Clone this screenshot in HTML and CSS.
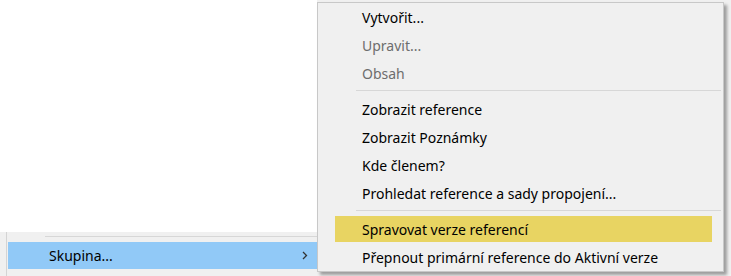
FILE: index.html
```html
<!DOCTYPE html>
<html lang="cs">
<head>
<meta charset="utf-8">
<title>Menu</title>
<link rel="stylesheet" href="styles.css">
</head>
<body>
<div class="screen">
  <div class="parent">
    <div class="parent-top"></div>
    <div class="parent-bottom">
      <div class="p-sep"></div>
      <div class="p-item active">
        <span class="p-label">Skupina...</span>
        <svg class="chev" width="6" height="9" viewBox="0 0 6 9"><path d="M1 1 L4.5 4.5 L1 8" fill="none" stroke="#333" stroke-width="1.3"/></svg>
      </div>
    </div>
  </div>
  <div class="submenu">
    <div class="item">Vytvořit...</div>
    <div class="item disabled">Upravit...</div>
    <div class="item disabled">Obsah</div>
    <div class="sep"></div>
    <div class="item">Zobrazit reference</div>
    <div class="item">Zobrazit Poznámky</div>
    <div class="item">Kde členem?</div>
    <div class="item">Prohledat reference a sady propojení...</div>
    <div class="sep"></div>
    <div class="item hot">Spravovat verze referencí</div>
    <div class="item">Přepnout primární reference do Aktivní verze</div>
  </div>
</div>
</body>
</html>
```
FILE: styles.css
```css
html, body {
  margin: 0;
  padding: 0;
  background: #f0f0f0;
}
.screen {
  position: relative;
  width: 731px;
  height: 276px;
  overflow: hidden;
  font-family: "Noto Sans", "Open Sans", sans-serif;
  font-size: 14px;
  color: #000;
}
.parent {
  width: 317px;
  height: 276px;
  display: flex;
  flex-direction: column;
}
.parent-top {
  height: 232px;
  background: #fff;
}
.parent-bottom {
  flex: 1;
  margin-left: 6px;
  border-left: 1px solid #d4d4d4;
  background: #f0f0f0;
  display: flex;
  flex-direction: column;
}
.p-sep {
  height: 1px;
  background: #d7d7d7;
  margin: 4px 0 5px 38px;
}
.p-item {
  height: 27px;
  margin-left: 1px;
  display: flex;
  align-items: center;
  padding-left: 41px;
  padding-right: 9px;
}
.p-item.active {
  background: #91c9f7;
}
.p-label {
  flex: 1;
}
.chev {
  display: block;
}
.submenu {
  position: absolute;
  left: 317px;
  top: 2px;
  width: 405px;
  height: 268px;
  background: #f0f0f0;
  border: 1px solid #c8c8c8;
  box-shadow: 3px 3px 3px rgba(0, 0, 0, 0.35);
  display: flex;
  flex-direction: column;
}
.item {
  height: 26px;
  margin: 1px 11px 1px 17px;
  padding-left: 27px;
  display: flex;
  align-items: center;
  white-space: nowrap;
}
.item.disabled {
  color: #6d6d6d;
}
.item.hot {
  background: #e8d462;
}
.sep {
  height: 1px;
  background: #d7d7d7;
  margin: 3px 2px 4px 38px;
}
```
